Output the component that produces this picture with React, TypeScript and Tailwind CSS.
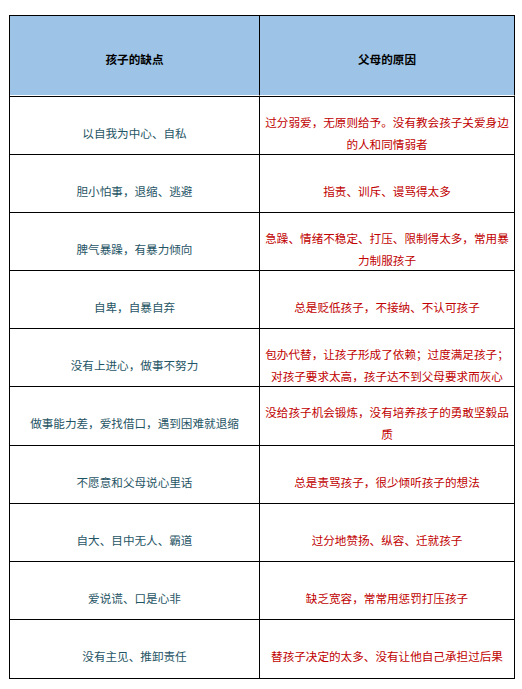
const rows: { left: string; right: string; h: string }[] = [
  { left: "以自我为中心、自私", right: "过分弱爱，无原则给予。没有教会孩子关爱身边的人和同情弱者", h: "h-[58px]" },
  { left: "胆小怕事，退缩、逃避", right: "指责、训斥、谩骂得太多", h: "h-[58px]" },
  { left: "脾气暴躁，有暴力倾向", right: "急躁、情绪不稳定、打压、限制得太多，常用暴力制服孩子", h: "h-[58px]" },
  { left: "自卑，自暴自弃", right: "总是贬低孩子，不接纳、不认可孩子", h: "h-[58px]" },
  { left: "没有上进心，做事不努力", right: "包办代替，让孩子形成了依赖；过度满足孩子；对孩子要求太高，孩子达不到父母要求而灰心", h: "h-[58px]" },
  { left: "做事能力差，爱找借口，遇到困难就退缩", right: "没给孩子机会锻炼，没有培养孩子的勇敢坚毅品质", h: "h-[59px]" },
  { left: "不愿意和父母说心里话", right: "总是责骂孩子，很少倾听孩子的想法", h: "h-[58px]" },
  { left: "自大、目中无人、霸道", right: "过分地赞扬、纵容、迁就孩子", h: "h-[58px]" },
  { left: "爱说谎、口是心非", right: "缺乏宽容，常常用惩罚打压孩子", h: "h-[58px]" },
  { left: "没有主见、推卸责任", right: "替孩子决定的太多、没有让他自己承担过后果", h: "h-[59px]" },
];

export default function App() {
  return (
    <div
      className="min-h-[689px] w-[522px] bg-white pl-[9px] pt-[15px] text-[11.6px] leading-[22px]"
      style={{ fontFamily: '"Noto Sans CJK SC", "Noto Sans", sans-serif' }}
    >
      <div className="w-[506px] border-l border-t border-black">
        {/* header */}
        <div className="grid grid-cols-[250px_255px] border-b border-black">
          <div className="flex h-[80px] items-center justify-center border-r border-b border-r-black border-b-white bg-[#9dc3e6] pt-[6px] font-bold text-black">
            孩子的缺点
          </div>
          <div className="flex h-[80px] items-center justify-center border-r border-b border-r-black border-b-white bg-[#9dc3e6] pt-[6px] font-bold text-black">
            父母的原因
          </div>
        </div>

        {rows.map((r) => (
          <div key={r.left} className={`grid grid-cols-[250px_255px] border-b border-black ${r.h}`}>
            <div className="flex items-center justify-center border-r border-black px-[4px] pt-[14px] text-center text-[#1f5565]">
              {r.left}
            </div>
            <div className="flex items-center justify-center border-r border-black px-[4px] pt-[14px] text-center text-[#c00000]">
              {r.right}
            </div>
          </div>
        ))}
      </div>
    </div>
  );
}
